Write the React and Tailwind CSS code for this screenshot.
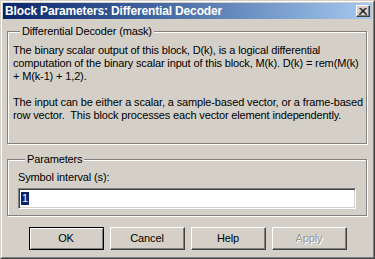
import React from "react";

const font = { fontFamily: '"Liberation Sans", Arial, sans-serif' };

const Button = ({ label, primary, disabled }) => (
  <button
    className={`w-[75px] h-[23px] text-[11px] bg-[#d4d0c8] border ${
      primary
        ? "border-black shadow-[inset_1px_1px_0_#ffffff,inset_-1px_-1px_0_#808080]"
        : "border-t-white border-l-white border-r-[#404040] border-b-[#404040] shadow-[inset_-1px_-1px_0_#808080]"
    } ${disabled ? "text-[#9a978f] [text-shadow:1px_1px_0_#ffffff]" : "text-black"}`}
  >
    {label}
  </button>
);

const GroupBox = ({ title, className, children }) => (
  <fieldset
    className={`border border-[#808080] shadow-[inset_1px_1px_0_#ffffff,1px_1px_0_#ffffff] ${className}`}
  >
    <legend className="ml-[7px] px-[2px] bg-[#d4d0c8] leading-[13px]">{title}</legend>
    {children}
  </fieldset>
);

export default function App() {
  return (
    <div
      className="w-[375px] h-[259px] border border-t-[#d4d0c8] border-l-[#d4d0c8] border-r-[#404040] border-b-[#404040] bg-[#d4d0c8] text-[11px] tracking-[-0.14px] text-black"
      style={font}
    >
      <div className="h-full border border-t-white border-l-white border-r-[#808080] border-b-[#808080] p-px flex flex-col">
        {/* title bar */}
        <div className="h-[16px] flex items-center justify-between pl-[2px] pr-[2px] bg-gradient-to-r from-[#0a246a] to-[#a6caf0]">
          <span className="text-white font-bold text-[12px] tracking-[-0.15px] leading-none">
            Block Parameters: Differential Decoder
          </span>
          <div className="w-[14px] h-[12px] bg-[#d4d0c8] border border-t-white border-l-white border-r-[#404040] border-b-[#404040] shadow-[inset_-1px_-1px_0_#808080] flex items-center justify-center">
            <svg width="8" height="7" viewBox="0 0 8 7">
              <path d="M0.5 0 L7.5 7 M1.5 0 L8 6.5 M7.5 0 L0.5 7 M6.5 0 L0 6.5" stroke="#000" strokeWidth="1" />
            </svg>
          </div>
        </div>

        <div className="flex flex-col pl-[4px] pr-[5px]">
          <GroupBox title="Differential Decoder (mask)" className="mt-[6px] pl-[5px] pr-[2px] pb-[21px]">
            <div className="leading-[13px] pt-[6px] whitespace-nowrap">
              <p>
                The binary scalar output of this block, D(k), is a logical differential
                <br />
                computation of the binary scalar input of this block, M(k). D(k) = rem(M(k)
                <br />+ M(k-1) + 1,2).
              </p>
              <p className="mt-[13px]">
                The input can be either a scalar, a sample-based vector, or a frame-based
                <br />
                row vector.&nbsp; This block processes each vector element independently.
              </p>
            </div>
          </GroupBox>

          <GroupBox title="Parameters" className="mt-[9px] pl-[10px] pr-[10px] pb-[6px]">
            <div className="leading-[13px] pt-[5px]">Symbol interval (s):</div>
            <div className="mt-[4px] h-[21px] border border-t-[#808080] border-l-[#808080] border-r-white border-b-white bg-white shadow-[inset_1px_1px_0_#404040,inset_-1px_-1px_0_#d4d0c8] flex items-center pl-[2px]">
              <span className="bg-[#0a246a] text-white leading-[13px] px-px">1</span>
            </div>
          </GroupBox>
        </div>

        <div className="mt-[11px] flex justify-center gap-[6px]">
          <Button label="OK" primary />
          <Button label="Cancel" />
          <Button label="Help" />
          <Button label="Apply" disabled />
        </div>
      </div>
    </div>
  );
}
